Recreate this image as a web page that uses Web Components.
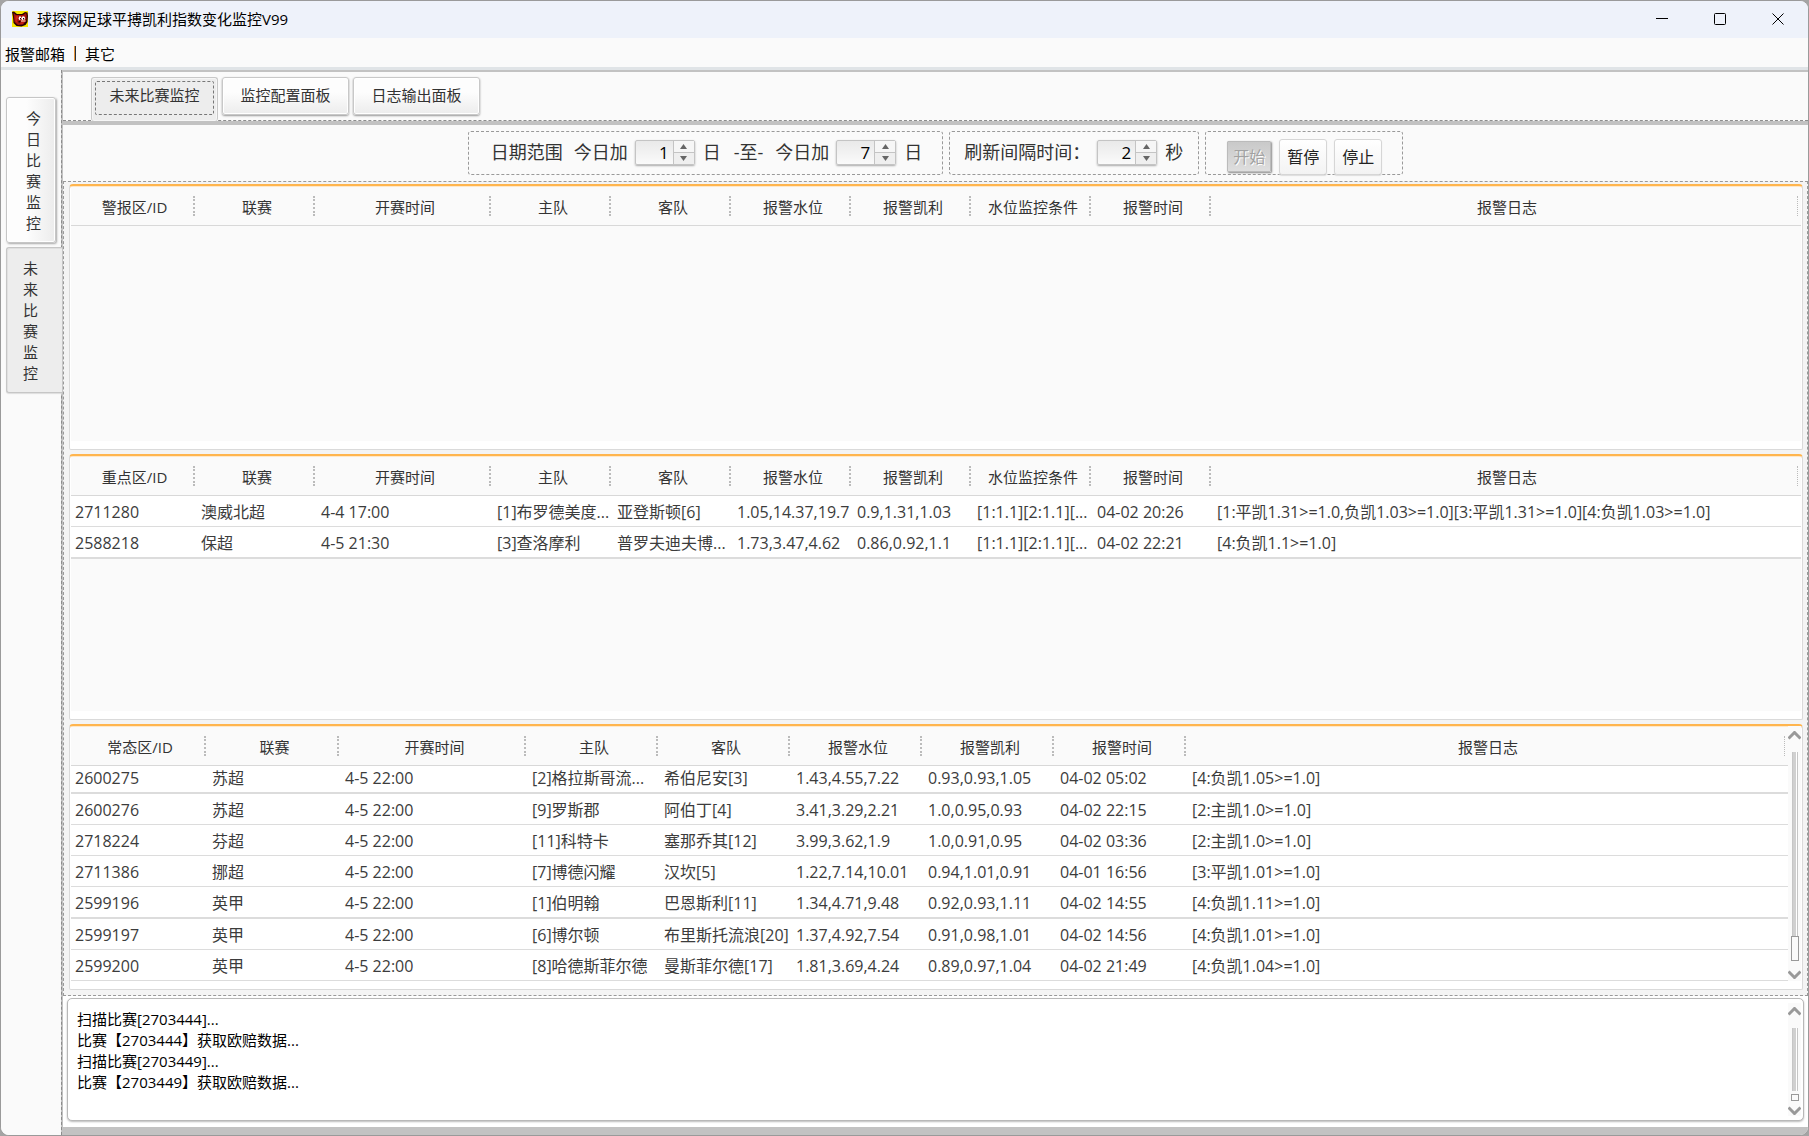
<!DOCTYPE html>
<html lang="zh-CN">
<head>
<meta charset="utf-8">
<title>球探网足球平搏凯利指数变化监控V99</title>
<style>
  html, body { height: 100%; margin: 0; background: #a4a4a4; }
  body { font: 15px/20px "Open Sans", "Noto Sans CJK SC", sans-serif; color: #333; }
</style>
</head>
<body>
<app-window></app-window>

<script>
const define = (name, html, setup) => customElements.define(name, class extends HTMLElement {
  constructor() {
    super();
    this.attachShadow({ mode: 'open' });
  }
  connectedCallback() {
    if (this.shadowRoot.childNodes.length) return;
    this.shadowRoot.innerHTML = html;
    if (setup) setup(this, this.shadowRoot);
  }
});

const RESET = `
  *, *::before, *::after { box-sizing: border-box; }
  button { font: inherit; color: inherit; margin: 0; padding: 0; border: 0; background: none; }
`;

/* ---- window caption ---- */
define('title-bar', `
  <style>${RESET}
    :host { display: flex; align-items: center; height: 37px; padding: 0 1px 2px 11px; background: #eef2fa; color: #000; flex: none; box-sizing: border-box; }
    .icon { width: 16px; height: 16px; flex: none; }
    .title { flex: 1; margin-left: 9px; font-size: 15px; line-height: 22px; }
    button { width: 58px; height: 35px; display: flex; align-items: center; justify-content: center; }
  </style>
  <svg class="icon" viewBox="0 0 16 16">
    <rect width="16" height="16" fill="#f8e800"/>
    <path fill="#2a0303" d="M0 1l2-.5L5 3h5l3-2 2.500.5L16 5l-.5 6-2 3-4 1.500-5-.5-3-3L1 6z"/>
    <path fill="#a8140a" d="M1.500 2L4 4h7l3-2 .8 3-.8 5-3 3.500-5 .5-3.500-3L2 6z"/>
    <path fill="#d4281a" d="M3.500 5.500L6 5v2L4.500 9l1 3L3.500 10zM8 11.500h4l-1.500 1.300H8.500z"/>
    <ellipse cx="8" cy="7.200" rx="1.300" ry="1.900" fill="#fff"/>
    <ellipse cx="11.300" cy="7.200" rx="1.800" ry="2" fill="#fff"/>
    <path fill="#f0a890" d="M9 9.200h4.500v1.500H9z"/>
    <path fill="#1a0000" d="M8 7h1v1.500H8zM11 7h1.200v1.500H11zM6.500 10h2v1.500h-2z"/>
  </svg>
  <span class="title"><slot></slot></span>
  <button aria-label="最小化"><svg width="12" height="12"><path d="M0 5.500h12" stroke="#000"/></svg></button>
  <button aria-label="最大化"><svg width="12" height="12"><rect x=".5" y=".5" width="11" height="11" rx="1" fill="none" stroke="#000"/></svg></button>
  <button aria-label="关闭"><svg width="12" height="12"><path d="M.5.5l11 11M11.500.5l-11 11" stroke="#000" fill="none"/></svg></button>
`);

/* ---- menu ---- */
define('menu-bar', `
  <style>${RESET}
    :host { display: flex; align-items: center; gap: 9px; height: 32px; padding: 2px 4px 0; background: #fafafa; border-bottom: 3px solid #e0e4e7; color: #000; flex: none; box-sizing: border-box; }
    i { width: 2px; height: 15px; background: linear-gradient(90deg, #e8963c 50%, #26303c 50%); }
  </style>
  <button>报警邮箱</button><i></i><button>其它</button>
`);

/* ---- vertical navigation ---- */
define('side-tabs', `
  <style>${RESET}
    :host { display: flex; flex-direction: column; gap: 4px; width: 60px; padding: 27px 0 0 5px; background: #fafafa; flex: none; box-sizing: border-box; }
    button { position: relative; width: 50px; height: 146px; padding: 9px 14px 7px 19px; line-height: 21px; font-size: 15px;
      border: 1px solid #c6c6c6; border-radius: 3px; color: #333;
      background: linear-gradient(90deg, #fdfdfd 40%, #ececec); box-shadow: 1px 1px 2px #aaa, inset 0 0 0 1px #fff; }
    button[aria-selected=true] { width: 56px; padding-left: 16px; padding-right: 24px; border-right: 0;
      border-radius: 3px 0 0 3px; background: #ededed; border-color: #c6c6c6; box-shadow: inset 1px 1px #e0e0e0, 0 1px 1px #ddd; }
  </style>
  <button role="tab" aria-selected="false">今日比赛监控</button>
  <button role="tab" aria-selected="true">未来比赛监控</button>
`);

/* ---- horizontal tabs ---- */
define('tab-strip', `
  <style>${RESET}
    :host { display: flex; align-items: flex-start; gap: 4px; height: 49px; padding: 5px 28px 0; background: #fafafa; border-bottom: 1px dashed #8c8c8c; flex: none; box-sizing: border-box; }
    button { width: 127px; height: 38px; padding-bottom: 3px; border: 1px solid #c8c8c8; border-radius: 3px;
      background: linear-gradient(#fdfdfd 40%, #ececec); box-shadow: 0 1px 2px #999, inset 0 0 0 1px #fff; }
    button[aria-selected=true] { height: 44px; padding: 3px 3px 6px; border-bottom: 0; background: #ededed;
      box-shadow: inset 0 0 0 1px #f6f6f6; margin-bottom: -1px; }
    button[aria-selected=true] span { display: block; padding: 2px 0; height: 34px; line-height: 22px; border: 1px dashed #777; border-radius: 2px; }
  </style>
  <button role="tab" aria-selected="true"><span>未来比赛监控</span></button>
  <button role="tab" aria-selected="false"><span>监控配置面板</span></button>
  <button role="tab" aria-selected="false"><span>日志输出面板</span></button>
`);

/* ---- label + number box + unit ---- */
define('spin-field', `
  <style>${RESET}
    :host { display: flex; align-items: center; gap: 8px; font-size: 18px; line-height: 26px; }
    label { margin-right: -1px; }
    .box { display: flex; width: 60px; height: 25px; border: 1px solid #c4c4c4; border-radius: 2px; background: linear-gradient(#e9e9e9, #fafafa); box-shadow: 0 1px 2px #aaa; }
    input { flex: 1; min-width: 0; border: 0; padding: 2px 4px 0 0; background: none; text-align: right; font: 17px/20px "Open Sans", "Noto Sans CJK SC", sans-serif; color: #000; }
    .steps { display: flex; flex-direction: column; width: 21px; border-left: 1px solid #c4c4c4; background: #f6f6f6; }
    .steps button { flex: 1; display: flex; align-items: center; justify-content: center; }
    .steps button + button { border-top: 1px solid #c4c4c4; background: #efefef; }
  </style>
  <label for="n"></label>
  <span class="box"><input id="n" type="text" inputmode="numeric"><span class="steps">
    <button aria-label="增加"><svg width="7" height="5"><path d="M3.500 0L7 5H0z" fill="#666"/></svg></button>
    <button aria-label="减少"><svg width="7" height="5"><path d="M0 0H7L3.500 5z" fill="#666"/></svg></button>
  </span></span>
  <span class="unit"></span>
`, (el, root) => {
  const input = root.querySelector('input');
  root.querySelector('label').textContent = el.getAttribute('label');
  root.querySelector('.unit').textContent = el.getAttribute('unit');
  input.value = el.getAttribute('value');
  const [up, down] = root.querySelectorAll('button');
  up.onclick = () => input.value = +input.value + 1;
  down.onclick = () => input.value = Math.max(0, input.value - 1);
});

/* ---- settings bar ---- */
define('control-bar', `
  <style>${RESET}
    :host { display: flex; justify-content: center; align-items: flex-start; gap: 6px; height: 56px; padding-top: 6px; background: #fafafa; flex: none; box-sizing: border-box; }
    .group { display: flex; align-items: center; gap: 11px; height: 44px; padding: 0 20px 2px 22px; border: 1px dashed #999; border-radius: 3px; font-size: 18px; line-height: 26px; }
    .group .to { padding: 0 1px 0 2px; }
    .group.interval { padding: 0 15px 2px 14px; }
    .group.run { align-items: flex-start; gap: 7px; padding: 7px 20px 0 21px; }
    .run button { width: 48px; height: 36px; border: 1px solid #d6d6d6; border-radius: 3px; background: linear-gradient(#fff, #f3f3f3); font-size: 16px; line-height: 24px; box-shadow: 0 1px 1px #ddd; color: #222; }
    .run button:disabled { width: 44px; height: 31px; margin: 2px 1px 0 0; border-color: #bbb; border-radius: 1px; background: linear-gradient(#c9c9c9, #dedede); color: #a2a2a2; text-shadow: 1px 1px #fff; box-shadow: 1px 1px 2px #888; }
  </style>
  <div class="group"><span>日期范围</span>
    <spin-field label="今日加" value="1" unit="日"></spin-field><span class="to">-至-</span>
    <spin-field label="今日加" value="7" unit="日"></spin-field></div>
  <div class="group interval"><spin-field label="刷新间隔时间：" value="2" unit="秒"></spin-field></div>
  <div class="group run"><button disabled>开始</button><button>暂停</button><button>停止</button></div>
`);

/* ---- scroll bar ---- */
define('scroll-rail', `
  <style>${RESET}
    :host { display: flex; flex-direction: column; align-items: center; width: 13px; flex: none; background: #fafafa; }
    button { display: flex; height: 9px; }
    .track { flex: 1; display: flex; flex-direction: column; align-items: center; width: 8px; margin: 12px 0 var(--below, 9px); }
    .line { flex: 1; width: 6px; background: #d0d0d0; border: solid #c6c6c6; border-width: 0 1px; box-shadow: inset -1px 0 #fff; }
    .thumb { width: 8px; height: var(--thumb, 25px); margin-top: var(--gap, 0); border: 1px solid #999; background: #fafafa; flex: none; }
  </style>
  <button aria-label="向上"><svg width="13" height="9" fill="none" stroke="#999" stroke-width="3"><path d="M.5 7.500l6-6 6 6"/></svg></button>
  <div class="track"><div class="line"></div><div class="thumb"></div></div>
  <button aria-label="向下"><svg width="13" height="9" fill="none" stroke="#999" stroke-width="3"><path d="M.5 1.500l6 6 6-6"/></svg></button>
`);

/* ---- data grid ---- */
const GRIDS = {
  alarm: {
    cols: [125, 120, 176, 120, 120, 120, 120, 120, 120, 0],
    head: ['警报区/ID', '联赛', '开赛时间', '主队', '客队', '报警水位', '报警凯利', '水位监控条件', '报警时间', '报警日志'],
    rows: []
  },
  focus: {
    cols: [125, 120, 176, 120, 120, 120, 120, 120, 120, 0],
    head: ['重点区/ID', '联赛', '开赛时间', '主队', '客队', '报警水位', '报警凯利', '水位监控条件', '报警时间', '报警日志'],
    heavy: [1],
    rows: [
      ['2711280', '澳威北超', '4-4 17:00', '[1]布罗德美度...', '亚登斯顿[6]', '1.05,14.37,19.7', '0.9,1.31,1.03', '[1:1.1][2:1.1][...', '04-02 20:26', '[1:平凯1.31>=1.0,负凯1.03>=1.0][3:平凯1.31>=1.0][4:负凯1.03>=1.0]'],
      ['2588218', '保超', '4-5 21:30', '[3]查洛摩利', '普罗夫迪夫博...', '1.73,3.47,4.62', '0.86,0.92,1.1', '[1:1.1][2:1.1][...', '04-02 22:21', '[4:负凯1.1>=1.0]']
    ]
  },
  normal: {
    cols: [136, 133, 187, 132, 132, 132, 132, 132, 0],
    head: ['常态区/ID', '联赛', '开赛时间', '主队', '客队', '报警水位', '报警凯利', '报警时间', '报警日志'],
    heavy: [0, 4],
    rows: [
      ['2600275', '苏超', '4-5 22:00', '[2]格拉斯哥流...', '希伯尼安[3]', '1.43,4.55,7.22', '0.93,0.93,1.05', '04-02 05:02', '[4:负凯1.05>=1.0]'],
      ['2600276', '苏超', '4-5 22:00', '[9]罗斯郡', '阿伯丁[4]', '3.41,3.29,2.21', '1.0,0.95,0.93', '04-02 22:15', '[2:主凯1.0>=1.0]'],
      ['2718224', '芬超', '4-5 22:00', '[11]科特卡', '塞那乔其[12]', '3.99,3.62,1.9', '1.0,0.91,0.95', '04-02 03:36', '[2:主凯1.0>=1.0]'],
      ['2711386', '挪超', '4-5 22:00', '[7]博德闪耀', '汉坎[5]', '1.22,7.14,10.01', '0.94,1.01,0.91', '04-01 16:56', '[3:平凯1.01>=1.0]'],
      ['2599196', '英甲', '4-5 22:00', '[1]伯明翰', '巴恩斯利[11]', '1.34,4.71,9.48', '0.92,0.93,1.11', '04-02 14:55', '[4:负凯1.11>=1.0]'],
      ['2599197', '英甲', '4-5 22:00', '[6]博尔顿', '布里斯托流浪[20]', '1.37,4.92,7.54', '0.91,0.98,1.01', '04-02 14:56', '[4:负凯1.01>=1.0]'],
      ['2599200', '英甲', '4-5 22:00', '[8]哈德斯菲尔德', '曼斯菲尔德[17]', '1.81,3.69,4.24', '0.89,0.97,1.04', '04-02 21:49', '[4:负凯1.04>=1.0]']
    ]
  }
};

define('match-grid', `
  <style>${RESET}
    :host { display: flex; flex: 1 1 0; min-height: 0; padding: 0 1px 8px; background: #fff; box-sizing: border-box;
      border: 1px solid #dadada; border-top: 2px solid #ffb54e; border-radius: 4px 4px 2px 2px; box-shadow: inset 0 1px #ffe8c8; }
    .view { flex: 1; min-width: 0; overflow: hidden; margin-top: 1px; background: #fafafa; }
    table { width: 100%; table-layout: fixed; border-collapse: separate; border-spacing: 0; }
    th, td { padding: 0; white-space: nowrap; overflow: hidden; font-weight: 400; }
    th { height: 39px; font-size: 15px; line-height: 22px; border-bottom: 1px solid #d8d8d8; color: #333; vertical-align: top; padding-top: 9px; }
    th span { display: block; height: 20px; padding-left: 5px; border-right: 2px dotted #bbb; margin-right: 1px; }
    th:last-child span { border-right-width: 1px; margin-right: 3px; }
    td { height: 31px; padding-left: 5px; padding-top: 1px; background: #fff; border-bottom: 1px solid #dcdcdc; font-size: 16px; line-height: 22px; color: #3c3c3c; }
    td:first-child { padding-left: 4px; }
    tr.heavy td { height: 32px; border-bottom-width: 2px; }
    :host([scrolled]) tbody tr:first-child td { height: 28px; padding-top: 0; padding-bottom: 2px; }
    scroll-rail { padding: 5px 0 2px; }
    :host(:not([scrolled])) scroll-rail { display: none; }
  </style>
  <div class="view"><table><colgroup></colgroup><thead><tr></tr></thead><tbody></tbody></table></div>
  <scroll-rail></scroll-rail>
`, (el, root) => {
  const grid = GRIDS[el.getAttribute('source')];
  root.querySelector('colgroup').innerHTML = grid.cols.map(w => w ? `<col style="width:${w}px">` : '<col>').join('');
  root.querySelector('thead tr').innerHTML = grid.head.map(h => `<th scope="col"><span>${h}</span></th>`).join('');
  const body = root.querySelector('tbody');
  grid.rows.forEach((cells, i) => {
    const tr = body.insertRow();
    if (grid.heavy.includes(i)) tr.className = 'heavy';
    for (const text of cells) tr.insertCell().textContent = text;
  });
});

/* ---- log output ---- */
define('log-view', `
  <style>${RESET}
    :host { display: flex; height: 123px; margin: 2px 4px 6px; padding: 4px 2px 4px 9px; background: #fff; border: 1px solid #b8b8b8; border-radius: 5px; color: #000; flex: none; box-shadow: 0 1px 2px #bbb; box-sizing: border-box; }
    div { flex: 1; padding-top: 6px; font-size: 15px; line-height: 21px; }
    p { margin: 0; }
    scroll-rail { padding: 4px 0 1px; --thumb: 7px; --gap: 3px; --below: 5px; }
  </style>
  <div role="log"><p>扫描比赛[2703444]...</p><p>比赛【2703444】获取欧赔数据...</p><p>扫描比赛[2703449]...</p><p>比赛【2703449】获取欧赔数据...</p></div>
  <scroll-rail></scroll-rail>
`);

/* ---- shell ---- */
define('app-window', `
  <style>${RESET}
    :host { display: flex; flex-direction: column; height: 100vh; box-sizing: border-box; border: 1px solid #9a9a9a; border-radius: 9px; overflow: hidden; background: #fafafa; }
    .body { flex: 1; display: flex; min-height: 0; }
    main { flex: 1; min-width: 0; display: flex; flex-direction: column; padding: 2px 0 8px 1px; border-left: 1px dashed #8c8c8c; background: #c2c2c2; }
    control-bar { margin-top: 4px; }
    .panels { flex: 1; min-height: 0; display: flex; flex-direction: column; gap: 4px; padding: 2px 4px 5px 5px; background: #f4f4f4; border: 1px dashed #999; }
    .log { background: #fff; display: flow-root; flex: none; }
  </style>
  <title-bar>球探网足球平搏凯利指数变化监控V99</title-bar>
  <menu-bar></menu-bar>
  <div class="body">
    <side-tabs></side-tabs>
    <main>
      <tab-strip></tab-strip>
      <control-bar></control-bar>
      <section class="panels">
        <match-grid source="alarm"></match-grid>
        <match-grid source="focus"></match-grid>
        <match-grid source="normal" scrolled></match-grid>
      </section>
      <section class="log"><log-view></log-view></section>
    </main>
  </div>
`);
</script>
</body>
</html>
